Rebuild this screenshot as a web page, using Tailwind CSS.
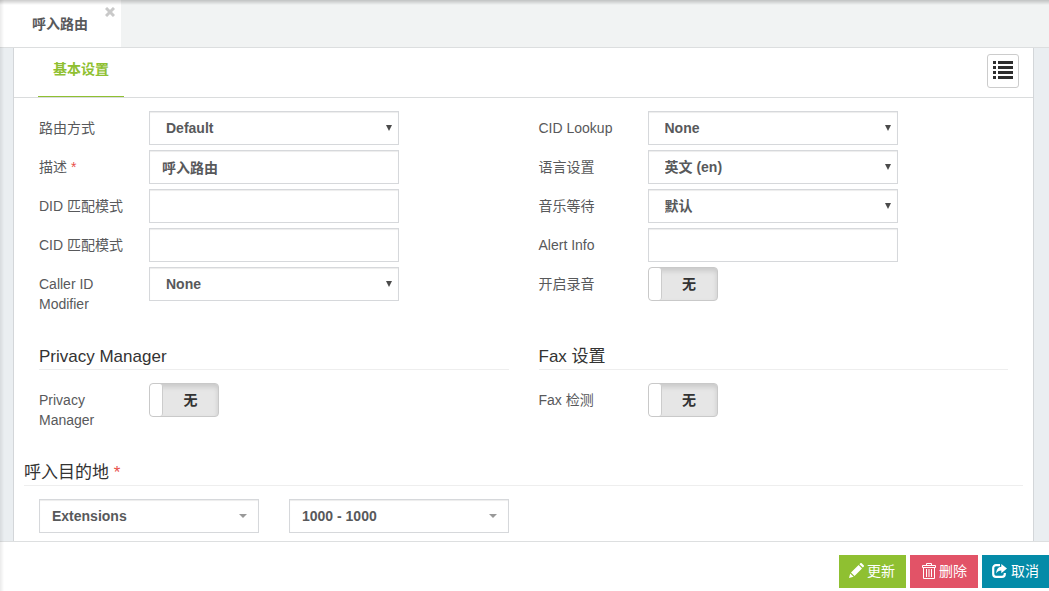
<!DOCTYPE html>
<html lang="zh-CN">
<head>
<meta charset="utf-8">
<meta name="viewport" content="width=device-width, initial-scale=1">
<title>呼入路由</title>
<script src="https://cdn.jsdelivr.net/npm/@tailwindcss/browser@4"></script>
</head>
<body class="flex h-screen flex-col bg-[#eaeef1] font-['Liberation_Sans','Noto_Sans_CJK_SC',sans-serif] text-sm leading-5 text-[#58595b]">

<header class="flex h-12 shrink-0 border-b border-[#dcdedf] bg-[#f1f3f3]">
  <div class="relative flex bg-white pr-[33px] pl-8">
    <a href="#" class="flex items-center font-bold">呼入路由</a>
    <button type="button" aria-label="关闭" class="absolute top-[7px] right-1.5">
      <svg class="size-2.5" viewBox="0 0 10 10" stroke="#c9c9c9" stroke-width="3" fill="none"><path d="M1 1l8 8M9 1L1 9"/></svg>
    </button>
  </div>
</header>

<main class="min-h-0 flex-1 overflow-y-auto pr-[15px] pl-[13px]">
  <div class="min-h-full border-x border-[#d3d6d9] bg-white">
    <div class="flex items-end justify-between border-b border-[#dadcdd] pr-3.5 pl-6">
      <nav><a href="#" class="flex h-[49px] items-center border-b border-[#8fc031] px-[15px] pb-1.5 font-bold text-[#8fc031]">基本设置</a></nav>
      <button type="button" aria-label="列表" class="mb-[9px] flex h-[34px] w-8 items-center justify-center rounded-[3px] border border-[#cccccc] bg-white pb-0.5">
        <svg class="h-[18px] w-5" viewBox="0 0 20 18" fill="#2e2e2e"><path d="M0 0h3v3H0zM5 0h15v3H5zM0 5h3v3H0zM5 5h15v3H5zM0 10h3v3H0zM5 10h15v3H5zM0 15h3v3H0zM5 15h15v3H5z"/></svg>
      </button>
    </div>

    <form class="px-2.5 pt-[13px] pb-2">
      <div class="grid grid-cols-2">
        <section class="flex flex-col gap-[5px] px-[15px]">
          <div class="flex">
            <label for="route" class="w-[110px] shrink-0 pt-[7px] pr-[15px]">路由方式</label>
            <div class="relative w-[250px]">
              <select id="route" class="h-[34px] w-full appearance-none border border-[#d6d8db] bg-white pr-6 pl-4 font-bold shadow-[inset_0_1px_1px_rgba(0,0,0,0.075)]"><option>Default</option></select>
              <svg class="pointer-events-none absolute top-3.5 right-[7px] h-1.5 w-[6px]" viewBox="0 0 6 6" fill="#4b4b4b"><path d="M0 0h6L3 6z"/></svg>
            </div>
          </div>
          <div class="flex">
            <label for="desc" class="w-[110px] shrink-0 pt-[7px] pr-[15px]">描述 <span class="text-[#e8504a]">*</span></label>
            <input id="desc" type="text" value="呼入路由" class="h-[34px] w-[250px] border border-[#d6d8db] bg-white px-3 font-bold shadow-[inset_0_1px_1px_rgba(0,0,0,0.075)]">
          </div>
          <div class="flex">
            <label for="did" class="w-[110px] shrink-0 pt-[7px] pr-[15px]">DID 匹配模式</label>
            <input id="did" type="text" class="h-[34px] w-[250px] border border-[#d6d8db] bg-white px-3 font-bold shadow-[inset_0_1px_1px_rgba(0,0,0,0.075)]">
          </div>
          <div class="flex">
            <label for="cid" class="w-[110px] shrink-0 pt-[7px] pr-[15px]">CID 匹配模式</label>
            <input id="cid" type="text" class="h-[34px] w-[250px] border border-[#d6d8db] bg-white px-3 font-bold shadow-[inset_0_1px_1px_rgba(0,0,0,0.075)]">
          </div>
          <div class="flex">
            <label for="modifier" class="w-[110px] shrink-0 pt-[7px] pr-[15px]">Caller ID Modifier</label>
            <div class="relative w-[250px]">
              <select id="modifier" class="h-[34px] w-full appearance-none border border-[#d6d8db] bg-white pr-6 pl-4 font-bold shadow-[inset_0_1px_1px_rgba(0,0,0,0.075)]"><option>None</option></select>
              <svg class="pointer-events-none absolute top-3.5 right-[7px] h-1.5 w-[6px]" viewBox="0 0 6 6" fill="#4b4b4b"><path d="M0 0h6L3 6z"/></svg>
            </div>
          </div>
        </section>

        <section class="flex flex-col gap-[5px] px-[15px]">
          <div class="flex">
            <label for="lookup" class="w-[109px] shrink-0 pt-[7px] pr-[15px]">CID Lookup</label>
            <div class="relative w-[250px]">
              <select id="lookup" class="h-[34px] w-full appearance-none border border-[#d6d8db] bg-white pr-6 pl-4 font-bold shadow-[inset_0_1px_1px_rgba(0,0,0,0.075)]"><option>None</option></select>
              <svg class="pointer-events-none absolute top-3.5 right-[7px] h-1.5 w-[6px]" viewBox="0 0 6 6" fill="#4b4b4b"><path d="M0 0h6L3 6z"/></svg>
            </div>
          </div>
          <div class="flex">
            <label for="language" class="w-[109px] shrink-0 pt-[7px] pr-[15px]">语言设置</label>
            <div class="relative w-[250px]">
              <select id="language" class="h-[34px] w-full appearance-none border border-[#d6d8db] bg-white pr-6 pl-4 font-bold shadow-[inset_0_1px_1px_rgba(0,0,0,0.075)]"><option>英文 (en)</option></select>
              <svg class="pointer-events-none absolute top-3.5 right-[7px] h-1.5 w-[6px]" viewBox="0 0 6 6" fill="#4b4b4b"><path d="M0 0h6L3 6z"/></svg>
            </div>
          </div>
          <div class="flex">
            <label for="music" class="w-[109px] shrink-0 pt-[7px] pr-[15px]">音乐等待</label>
            <div class="relative w-[250px]">
              <select id="music" class="h-[34px] w-full appearance-none border border-[#d6d8db] bg-white pr-6 pl-4 font-bold shadow-[inset_0_1px_1px_rgba(0,0,0,0.075)]"><option>默认</option></select>
              <svg class="pointer-events-none absolute top-3.5 right-[7px] h-1.5 w-[6px]" viewBox="0 0 6 6" fill="#4b4b4b"><path d="M0 0h6L3 6z"/></svg>
            </div>
          </div>
          <div class="flex">
            <label for="alert" class="w-[109px] shrink-0 pt-[7px] pr-[15px]">Alert Info</label>
            <input id="alert" type="text" class="h-[34px] w-[250px] border border-[#d6d8db] bg-white px-3 font-bold shadow-[inset_0_1px_1px_rgba(0,0,0,0.075)]">
          </div>
          <div class="flex">
            <label for="record" class="w-[109px] shrink-0 pt-[7px] pr-[15px]">开启录音</label>
            <label class="relative flex h-[34px] w-[70px] cursor-pointer overflow-hidden rounded border border-[#c9c9c9] bg-[#e6e6e6] font-bold text-[#333333] shadow-[inset_0_3px_5px_rgba(0,0,0,0.125)]">
              <input id="record" type="checkbox" class="absolute inset-0 appearance-none">
              <span class="w-[13px] rounded-[3px] border-r border-[#cccccc] bg-white"></span>
              <span class="flex flex-1 items-center justify-center">无</span>
            </label>
          </div>
        </section>
      </div>

      <div class="mt-[30px] grid grid-cols-2">
        <section class="px-[15px]">
          <h2 class="mb-[13px] border-b border-[#eeeeee] pt-px text-[17px] leading-6 text-[#333333]">Privacy Manager</h2>
          <div class="flex">
            <label for="privacy" class="w-[110px] shrink-0 pt-[7px] pr-[15px]">Privacy Manager</label>
            <label class="relative flex h-[34px] w-[70px] cursor-pointer overflow-hidden rounded border border-[#c9c9c9] bg-[#e6e6e6] font-bold text-[#333333] shadow-[inset_0_3px_5px_rgba(0,0,0,0.125)]">
              <input id="privacy" type="checkbox" class="absolute inset-0 appearance-none">
              <span class="w-[13px] rounded-[3px] border-r border-[#cccccc] bg-white"></span>
              <span class="flex flex-1 items-center justify-center">无</span>
            </label>
          </div>
        </section>
        <section class="px-[15px]">
          <h2 class="mb-[13px] border-b border-[#eeeeee] pt-px text-[17px] leading-6 text-[#333333]">Fax 设置</h2>
          <div class="flex">
            <label for="fax" class="w-[109px] shrink-0 pt-[7px] pr-[15px]">Fax 检测</label>
            <label class="relative flex h-[34px] w-[70px] cursor-pointer overflow-hidden rounded border border-[#c9c9c9] bg-[#e6e6e6] font-bold text-[#333333] shadow-[inset_0_3px_5px_rgba(0,0,0,0.125)]">
              <input id="fax" type="checkbox" class="absolute inset-0 appearance-none">
              <span class="w-[13px] rounded-[3px] border-r border-[#cccccc] bg-white"></span>
              <span class="flex flex-1 items-center justify-center">无</span>
            </label>
          </div>
        </section>
      </div>

      <section class="mt-[30px]">
        <h2 class="mb-[13px] border-b border-[#eeeeee] pt-px text-[17px] leading-6 text-[#333333]">呼入目的地 <span class="text-[#e8504a]">*</span></h2>
        <div class="flex gap-[30px] px-[15px]">
          <div class="relative w-[220px]">
            <select aria-label="目的地类型" class="h-[34px] w-full appearance-none border border-[#d6d8db] bg-white pr-6 pl-3 font-bold shadow-[inset_0_1px_1px_rgba(0,0,0,0.075)]"><option>Extensions</option></select>
            <svg class="pointer-events-none absolute top-[15px] right-3 h-1 w-2" viewBox="0 0 8 4" fill="#999999"><path d="M0 0h8L4 4z"/></svg>
          </div>
          <div class="relative w-[220px]">
            <select aria-label="分机" class="h-[34px] w-full appearance-none border border-[#d6d8db] bg-white pr-6 pl-3 font-bold shadow-[inset_0_1px_1px_rgba(0,0,0,0.075)]"><option>1000 - 1000</option></select>
            <svg class="pointer-events-none absolute top-[15px] right-3 h-1 w-2" viewBox="0 0 8 4" fill="#999999"><path d="M0 0h8L4 4z"/></svg>
          </div>
        </div>
      </section>
    </form>
  </div>
</main>

<footer class="flex h-[50px] shrink-0 justify-end gap-1 border-t border-[#dddfe0] bg-white pt-[13px] text-white">
  <button type="button" class="flex h-[33px] items-center gap-[3px] bg-[#8fc031] pr-[11px] pb-0.5 pl-2.5">
    <svg class="size-[15px]" viewBox="0 0 15 15" fill="currentColor"><path d="M0 15l1.200-4.600 3.400 3.400zM2 9.500L9.600 2l3.400 3.400L5.500 13zM10.400 1.200l.9-.9a1 1 0 0 1 1.400 0l2 2a1 1 0 0 1 0 1.400l-.9.9z"/></svg>
    更新
  </button>
  <button type="button" class="flex h-[33px] items-center gap-[3px] bg-[#e25367] pr-[11px] pb-0.5 pl-3">
    <svg class="h-4 w-3.5" viewBox="0 0 14 16" fill="none" stroke="currentColor"><path d="M4.500 2V.5h5V2"/><path d="M.5 4.500v-2h13v2z"/><path d="M1.500 5v10.500h11V5M4.500 6v8M7 6v8M9.500 6v8"/></svg>
    删除
  </button>
  <button type="button" class="flex h-[33px] items-center gap-1 bg-[#048ba8] pr-2.5 pb-0.5 pl-2.5">
    <svg class="h-3.5 w-[15px]" viewBox="0 0 15 14" fill="none" stroke="currentColor"><path d="M8 1.200H4A2.800 2.800 0 0 0 1.200 4v6A2.800 2.800 0 0 0 4 12.800h6a2.800 2.800 0 0 0 2.800-2.800V9" stroke-width="2.200"/><path d="M9.300 0L15 4.600 9.300 9.200V6.500C7 6.500 5.500 7.300 4.300 9.500 4.300 5.500 6 3 9.300 2.800z" fill="currentColor" stroke="none"/></svg>
    取消
  </button>
</footer>

<div class="pointer-events-none fixed inset-x-0 top-0 h-[5px] bg-linear-to-b from-black/20 to-transparent"></div>
<div class="pointer-events-none fixed inset-y-0 left-0 w-1 bg-linear-to-r from-black/8 to-transparent"></div>
</body>
</html>
